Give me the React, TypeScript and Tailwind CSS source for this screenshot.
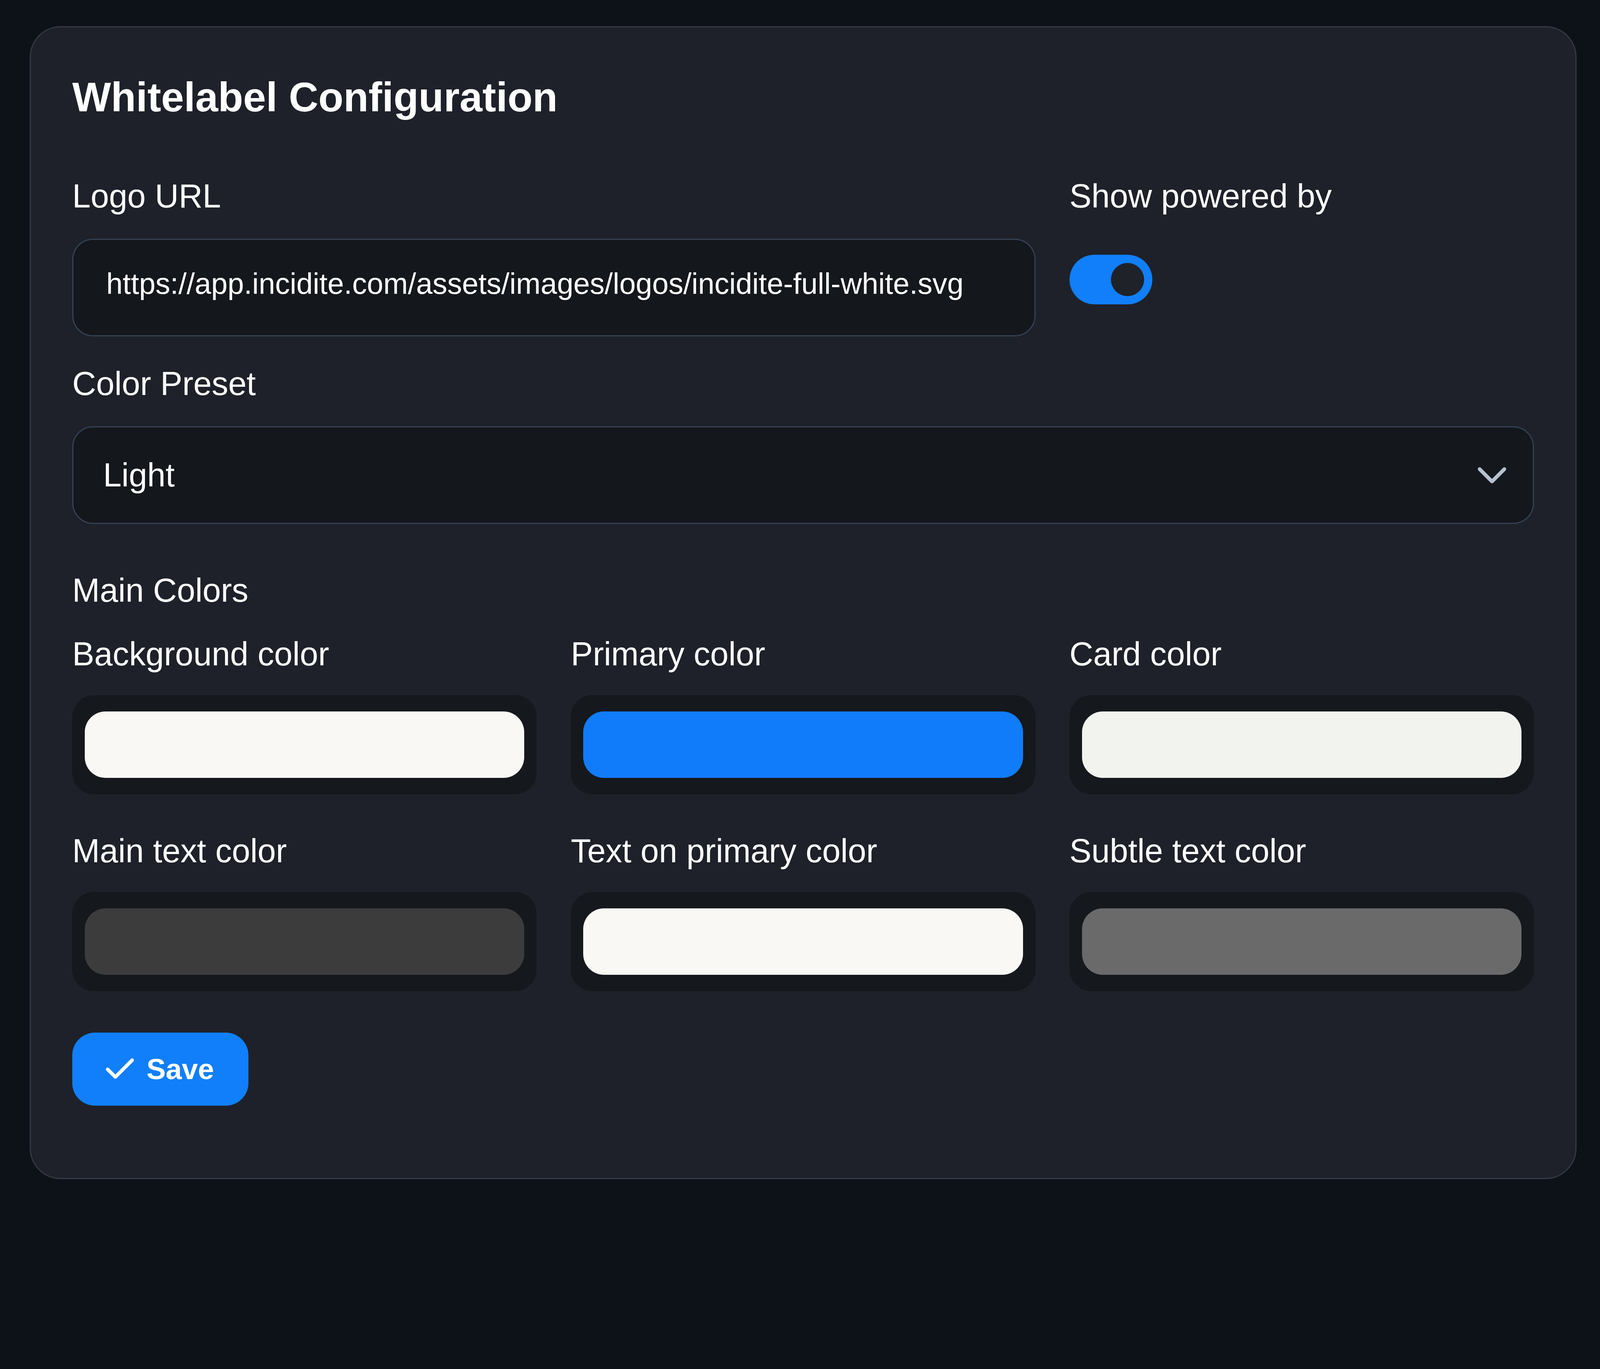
import React from 'react';
import { Check, ChevronDown } from 'lucide-react';

const SWATCHES = [
  { label: 'Background color', fill: 'bg-[#f9f8f4]' },
  { label: 'Primary color', fill: 'bg-[#117cfa]' },
  { label: 'Card color', fill: 'bg-[#f2f2ee]' },
  { label: 'Main text color', fill: 'bg-[#3c3c3c]' },
  { label: 'Text on primary color', fill: 'bg-[#f9f8f4]' },
  { label: 'Subtle text color', fill: 'bg-[#6a6a6a]' },
];

const labelCls = 'block text-[84.5px] leading-[127px] text-white';

const App: React.FC = () => {
  return (
    <div className="min-h-screen bg-[#0d1118] pl-[76px] pr-[60px] pt-[67px] pb-[54px] font-['Liberation_Sans',Arial,sans-serif] text-white">
      <div className="rounded-[79px] border-[3px] border-[#363a44] bg-[#1e2129] px-[106px] pt-[115px] pb-[185px]">
        <h1 className="text-[105px] font-bold leading-[127px]">Whitelabel Configuration</h1>

        {/* Logo + powered by */}
        <div className="mt-[127px] grid grid-cols-3 gap-x-[87px]">
          <div className="col-span-2 min-w-0">
            <label className={labelCls}>Logo URL</label>
            <div className="mt-[45px] rounded-[53px] border-[3px] border-[#344256] bg-[#14171c] pl-[84px] pt-[57px] pb-[76px] text-[75.5px] leading-[111px] whitespace-nowrap overflow-hidden">
              https://app.incidite.com/assets/images/logos/incidite-full-white.svg
            </div>
          </div>
          <div>
            <label className={labelCls}>Show powered by</label>
            <div className="mt-[86px] flex h-[127px] w-[212px] items-center justify-end rounded-full bg-[#117ffa] pr-[21px]">
              <div className="h-[85px] w-[85px] rounded-full bg-[#1f2229]" />
            </div>
          </div>
        </div>

        {/* Preset */}
        <label className={`${labelCls} mt-[58px]`}>Color Preset</label>
        <div className="mt-[45px] flex h-[250px] items-center justify-between rounded-[53px] border-[3px] border-[#344256] bg-[#14171c] pl-[76px] pr-[41px]">
          <span className="text-[84.5px] leading-[127px]">Light</span>
          <ChevronDown size={127} strokeWidth={1.75} color="#b6c2d1" />
        </div>

        {/* Colors */}
        <div className={`${labelCls} mt-[107px]`}>Main Colors</div>
        <div className="mt-[36px] grid grid-cols-3 gap-x-[87px] gap-y-[82px]">
          {SWATCHES.map((s) => (
            <div key={s.label}>
              <label className={labelCls}>{s.label}</label>
              <div className="mt-[41px] rounded-[56px] bg-[#15181c] px-[32px] py-[42px]">
                <div className={`h-[170px] rounded-[53px] ${s.fill}`} />
              </div>
            </div>
          ))}
        </div>

        <button className="mt-[106px] flex h-[187px] items-center gap-[21px] rounded-[58px] bg-[#117ffa] pl-[75px] pr-[88px] text-[74px] font-bold leading-none text-white">
          <Check size={94} strokeWidth={2.3} />
          Save
        </button>
      </div>
    </div>
  );
};

export default App;
